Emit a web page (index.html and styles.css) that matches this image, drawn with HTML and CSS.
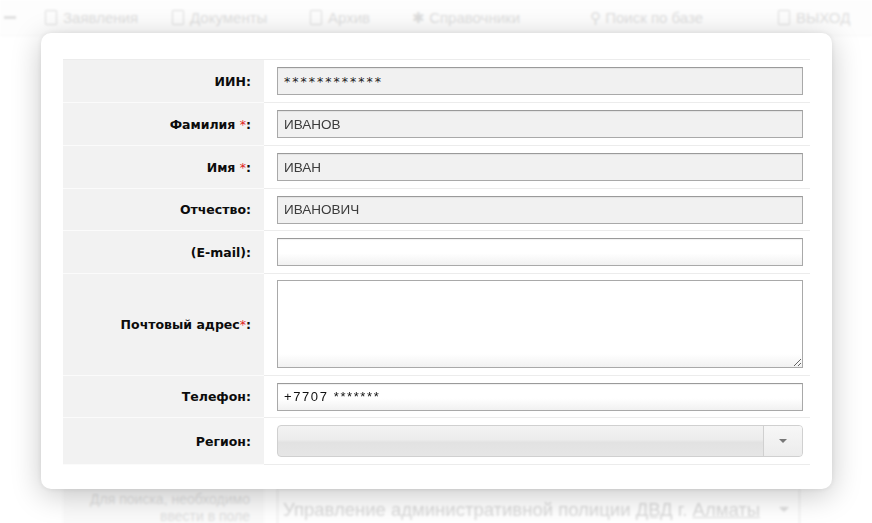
FILE: index.html
```html
<!DOCTYPE html>
<html lang="ru">
<head>
<meta charset="utf-8">
<title>Форма</title>
<link rel="stylesheet" href="styles.css">
</head>
<body>
<div class="page">
  <nav class="nav">
    <span class="nav-item"><span class="nav-dot"></span></span>
    <span class="nav-item"><span class="nav-ico"></span>Заявления</span>
    <span class="nav-item"><span class="nav-ico"></span>Документы</span>
    <span class="nav-item"><span class="nav-ico"></span>Архив</span>
    <span class="nav-item">✱ Справочники</span>
    <span class="nav-item">⚲ Поиск по базе</span>
    <span class="nav-item"><span class="nav-ico"></span>ВЫХОД</span>
  </nav>
  <div class="bg-form">
    <div class="bg-row"><div class="bg-label"></div><div class="bg-field"></div></div>
    <div class="bg-row"><div class="bg-label"></div><div class="bg-field"></div></div>
    <div class="bg-row"><div class="bg-label"></div><div class="bg-field"></div></div>
    <div class="bg-row"><div class="bg-label"></div><div class="bg-field"></div></div>
    <div class="bg-row"><div class="bg-label"></div><div class="bg-field"></div></div>
    <div class="bg-row"><div class="bg-label"></div><div class="bg-field"></div></div>
    <div class="bg-row"><div class="bg-label"></div><div class="bg-field"></div></div>
    <div class="bg-row"><div class="bg-label"></div><div class="bg-field"></div></div>
    <div class="bg-row"><div class="bg-label"></div><div class="bg-field"></div></div>
    <div class="bg-row bg-last">
      <div class="bg-label">Для поиска, необходимо<br>ввести в поле</div>
      <div class="bg-field"><div class="bg-select">Управление административной полиции <u>ДВД</u> г. <u>Алматы</u><span class="bg-arrow"></span></div></div>
    </div>
  </div>
</div>

<div class="modal">
  <div class="form">
    <div class="row">
      <div class="label"><span>ИИН:</span></div>
      <div class="field"><input class="input input-ro input-iin" type="text" value="************" readonly></div>
    </div>
    <div class="row">
      <div class="label"><span>Фамилия <span class="req">*</span>:</span></div>
      <div class="field"><input class="input input-ro" type="text" value="ИВАНОВ" readonly></div>
    </div>
    <div class="row">
      <div class="label"><span>Имя <span class="req">*</span>:</span></div>
      <div class="field"><input class="input input-ro" type="text" value="ИВАН" readonly></div>
    </div>
    <div class="row row-short">
      <div class="label"><span>Отчество:</span></div>
      <div class="field"><input class="input input-ro" type="text" value="ИВАНОВИЧ" readonly></div>
    </div>
    <div class="row">
      <div class="label"><span>(E-mail):</span></div>
      <div class="field"><input class="input" type="text" value=""></div>
    </div>
    <div class="row row-tall">
      <div class="label"><span>Почтовый адрес<span class="req">*</span>:</span></div>
      <div class="field"><textarea class="textarea"></textarea></div>
    </div>
    <div class="row row-short">
      <div class="label"><span>Телефон:</span></div>
      <div class="field"><input class="input input-phone" type="text" value="+7707 *******"></div>
    </div>
    <div class="row row-select">
      <div class="label"><span>Регион:</span></div>
      <div class="field">
        <div class="select"><span class="select-text"></span><span class="select-arrow"><span class="caret"></span></span></div>
      </div>
    </div>
  </div>
</div>
</body>
</html>
```

FILE: styles.css
```css
html, body {
  margin: 0;
  padding: 0;
}
body {
  width: 872px;
  height: 523px;
  overflow: hidden;
  position: relative;
  background: #ffffff;
  font-family: "Liberation Sans", Arial, sans-serif;
}

/* ---------- faded page behind the modal ---------- */
.page {
  opacity: 0.2;
  filter: blur(1.3px);
}
.nav {
  height: 35px;
  display: grid;
  grid-template-columns: 45px 127px 138px 102px 178px 188px 94px;
  align-items: center;
  font-size: 15px;
  color: #555;
  border-bottom: 1px solid #ddd;
  background: #f4f4f4;
  white-space: nowrap;
  overflow: hidden;
}
.nav-item {
  display: flex;
  align-items: center;
  gap: 6px;
  overflow: hidden;
}
.nav-dot {
  width: 12px;
  height: 3px;
  background: #666;
  margin-left: 4px;
}
.nav-ico {
  flex-shrink: 0;
  width: 10px;
  height: 13px;
  border: 1.5px solid #555;
  border-radius: 1px;
}
.bg-form {
  margin: 0 62px 0 63px;
}
.bg-row {
  display: flex;
  height: 49px;
  border-bottom: 1px solid #bbb;
}
.bg-label {
  flex: 0 0 201px;
  background: #e6e6e6;
}
.bg-field { flex: 1; min-width: 0; }
.bg-last { height: 60px; border-bottom: 0; }
.bg-last .bg-label {
  color: #555;
  font-size: 14px;
  text-align: right;
  padding: 5px 14px 0 0;
  box-sizing: border-box;
  line-height: 17px;
  white-space: nowrap;
}
.bg-select {
  margin: 2px 10px 0 13px;
  height: 44px;
  border: 1px solid #999;
  box-sizing: border-box;
  font-size: 18.5px;
  color: #444;
  padding: 10px 5px;
  position: relative;
  white-space: nowrap;
  overflow: hidden;
}
.bg-arrow {
  position: absolute;
  right: 10px;
  top: 18px;
  border: 5px solid transparent;
  border-top-color: #555;
}

/* ---------- modal ---------- */
.modal {
  position: absolute;
  left: 41px;
  top: 33px;
  width: 791px;
  height: 456px;
  box-sizing: border-box;
  padding: 26px 22px 24px 22px;
  background: #ffffff;
  border-radius: 10px;
  box-shadow: 0 6px 30px rgba(0, 0, 0, 0.22), 0 0 6px rgba(0, 0, 0, 0.08);
}
.form {
  display: flex;
  flex-direction: column;
  border-top: 1px solid #ececec;
}
.row {
  display: grid;
  grid-template-columns: 201px 1fr;
  height: 43px;
  box-sizing: border-box;
  border-bottom: 1px solid #ececec;
}
.row-short { height: 42px; }
.row-tall { height: 102px; }
.row-select { height: 47px; }
.label {
  background: #f2f2f2;
  display: flex;
  align-items: center;
  justify-content: flex-end;
  padding-right: 13px;
  font-family: "DejaVu Sans", Verdana, sans-serif;
  font-size: 12.5px;
  font-weight: bold;
  color: #0c0c0c;
  border-bottom: 1px solid #fbfbfb;
  margin-bottom: -1px;
  white-space: nowrap;
}
.req {
  color: #e0201b;
  font-weight: normal;
}
.field {
  display: flex;
  align-items: center;
  padding: 0 7px 0 13px;
}
.input {
  width: 100%;
  height: 28px;
  box-sizing: border-box;
  border: 1px solid #a9a9a9;
  border-top-color: #9a9a9a;
  padding: 0 6px;
  font-family: "Liberation Sans", Arial, sans-serif;
  font-size: 13.5px;
  color: #333;
  background: linear-gradient(#ffffff 55%, #f1f1f1);
  box-shadow: inset 0 1px 1px rgba(0, 0, 0, 0.06);
  outline: none;
}
.input-ro {
  background: #f1f1f1;
  color: #3c3c3c;
}
.input-iin {
  font-family: "DejaVu Sans", Verdana, sans-serif;
  font-size: 12.5px;
  letter-spacing: 2px;
  color: #222;
}
.input-phone {
  font-size: 13px;
  letter-spacing: 1.6px;
  color: #111;
}
.textarea {
  display: block;
  width: 100%;
  height: 88px;
  box-sizing: border-box;
  border: 1px solid #a9a9a9;
  background: linear-gradient(#ffffff 85%, #f1f1f1);
  resize: both;
  outline: none;
  margin: 0;
}
.row-tall .field { align-items: flex-start; padding-top: 6px; }
.select {
  width: 100%;
  height: 32px;
  box-sizing: border-box;
  display: flex;
  border: 1px solid #d0d0d0;
  border-radius: 4px;
  background: linear-gradient(#f3f3f3 0%, #ececec 45%, #e2e2e2 55%, #e6e6e6 100%);
  overflow: hidden;
}
.select-text { flex: 1; }
.select-arrow {
  width: 38px;
  border-left: 1px solid #d0d0d0;
  background: linear-gradient(#f7f7f7, #ececec);
  display: flex;
  align-items: center;
  justify-content: center;
}
.caret {
  width: 0;
  height: 0;
  border-left: 4px solid transparent;
  border-right: 4px solid transparent;
  border-top: 4px solid #777;
}
```
